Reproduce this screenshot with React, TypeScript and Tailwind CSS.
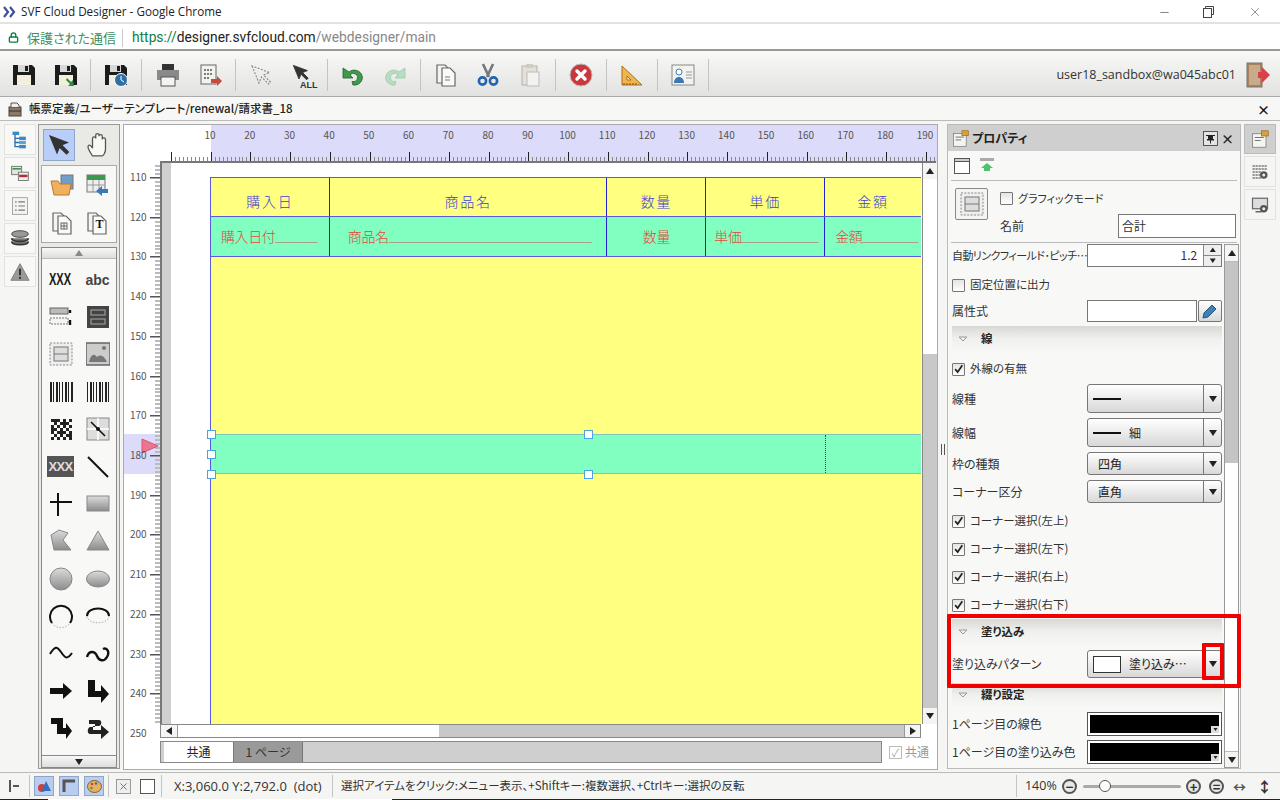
import type { ReactNode } from "react";
import { Minus, X as CloseIcon, Lock } from "lucide-react";

const Ico = ({ s = 24, children }: { s?: number; children: ReactNode }) => (
  <svg width={s} height={s} viewBox="0 0 24 24" className="block shrink-0">
    {children}
  </svg>
);

const Floppy = ({ children }: { children?: ReactNode }) => (
  <Ico>
    <path d="M1 2h19l3 3v17H1z" fill="#1c1c1c" />
    <rect x="6" y="2" width="11" height="7" fill="#d8d8d8" />
    <rect x="13" y="3" width="3" height="5" fill="#1c1c1c" />
    <rect x="5" y="12" width="14" height="10" fill="#f4efdc" />
    {children}
  </Ico>
);

const Page = ({ x = 7, y = 3, w = 13, h = 18, fill = "#f4f4f0" }) => (
  <path d={`M${x} ${y}h${w - 5}l5 5v${h - 5}h-${w}z`} fill={fill} stroke="#666" strokeWidth="1.2" />
);

const Pages = ({ children }: { children?: ReactNode }) => (
  <Ico>
    <Page x={3} y={2} />
    <Page x={8} y={5} fill="#fafafa" />
    {children}
  </Ico>
);

const Cursor = ({ color = "#333", dashed = false }) => (
  <path
    d="M3 3l7 17 2.5-6 7 7 2-2-7-7 6-2.5z"
    fill={dashed ? "none" : color}
    stroke={dashed ? "#888" : color}
    strokeWidth="1.1"
    strokeDasharray={dashed ? "2 1.4" : undefined}
  />
);

const Undo = ({ color, flip = false }: { color: string; flip?: boolean }) => (
  <Ico>
    <g transform={flip ? "translate(24 0) scale(-1 1)" : undefined}>
      <path d="M8 9a8 7.5 0 1 1 4 13l-1-3.5a4.2 4.2 0 1 0-2-6.5l3 3H2V5z" fill={color} stroke={flip ? "#9cc9ac" : "#1e5f2c"} strokeWidth=".8" />
    </g>
  </Ico>
);

// main toolbar icons, groups split by a thin separator
const toolbarGroups: { w: number; icons: ReactNode[] }[] = [
  { w: 90, icons: [<Floppy />, <Floppy><path d="M13 15l4 4 2-2 1 6h-6l2-2-4-4z" fill="#2d8a3e" /></Floppy>] },
  { w: 50, icons: [<Floppy><circle cx="17" cy="17" r="6.5" fill="#2f6fa8" stroke="#fff" /><path d="M17 13v4l3 2" stroke="#fff" fill="none" /></Floppy>] },
  {
    w: 93,
    icons: [
      <Ico>
        <rect x="6" y="1" width="12" height="6" fill="#333" />
        <rect x="1" y="7" width="22" height="10" fill="#8a8a8a" />
        <rect x="5" y="14" width="14" height="9" fill="#f4f4f4" stroke="#555" />
      </Ico>,
      <Ico>
        <rect x="3" y="2" width="15" height="19" fill="#f2f2ee" stroke="#666" />
        <path d="M6 7h9M6 11h9M6 15h6" stroke="#555" strokeDasharray="2 1" strokeWidth="1.4" />
        <path d="M13 16h6v-3l5 5-5 5v-3h-6z" fill="#c9483f" />
      </Ico>,
    ],
  },
  {
    w: 91,
    icons: [
      <Ico><Cursor dashed /></Ico>,
      <div className="relative">
        <Ico><g transform="scale(.8)"><Cursor /></g></Ico>
        <span className="absolute right-[-3px] bottom-[-3px] text-[9px] font-bold leading-none text-[#333] font-['Liberation_Sans',sans-serif]">ALL</span>
      </div>,
    ],
  },
  { w: 92, icons: [<Undo color="#3e9b4c" />, <Undo color="#b7dcc1" flip />] },
  {
    w: 134,
    icons: [
      <Pages><path d="M11 14h5M11 17h5" stroke="#777" /></Pages>,
      <Ico>
        <path d="M7 1l6 13M17 1l-6 13" stroke="#777" strokeWidth="2.6" />
        <circle cx="6.5" cy="18" r="3.6" fill="none" stroke="#2264b0" strokeWidth="2.6" />
        <circle cx="17.5" cy="18" r="3.6" fill="none" stroke="#2264b0" strokeWidth="2.6" />
      </Ico>,
      <Ico>
        <rect x="4" y="3" width="15" height="19" fill="#e3e0d8" stroke="#b5b2aa" />
        <rect x="8" y="1" width="7" height="4" fill="#cfccc4" />
        <rect x="9" y="9" width="12" height="14" fill="#f2f2ee" stroke="#bbb" />
      </Ico>,
    ],
  },
  {
    w: 50,
    icons: [
      <Ico>
        <circle cx="12" cy="12" r="11" fill="#c8383c" stroke="#bbb" />
        <path d="M8 8l8 8M16 8l-8 8" stroke="#fff" strokeWidth="3.4" strokeLinecap="round" />
      </Ico>,
    ],
  },
  {
    w: 50,
    icons: [
      <Ico>
        <path d="M2 22V3l20 19z" fill="#f0b64a" stroke="#a9701c" />
        <path d="M7 17v-4l4 4z" fill="#fff4d8" stroke="#a9701c" />
        <path d="M4 22v-2M7 22v-2M10 22v-2M13 22v-2M16 22v-2" stroke="#7a5010" />
      </Ico>,
    ],
  },
  {
    w: 50,
    icons: [
      <Ico>
        <rect x="1" y="2" width="22" height="20" fill="#f2f2ee" stroke="#888" />
        <circle cx="8" cy="9" r="3" fill="#fff" stroke="#3b78b5" />
        <path d="M3 20c0-8 10-8 10 0z" fill="#3b78b5" />
        <path d="M15 9h6M15 12h6M15 15h6" stroke="#999" />
      </Ico>,
    ],
  },
];

const sideIcons: ReactNode[] = [
  <Ico s={20}>
    <path d="M6 3v17h8M6 10h8M6 15h8" stroke="#2c6ca8" fill="none" strokeWidth="1.6" />
    <rect x="3" y="2" width="8" height="4" fill="#3d87c4" />
    <rect x="11" y="8" width="8" height="4" fill="#3d87c4" />
    <rect x="11" y="13" width="8" height="4" fill="#58a2d8" />
    <rect x="11" y="18" width="8" height="4" fill="#3d87c4" />
  </Ico>,
  <Ico s={20}>
    <rect x="2" y="4" width="12" height="10" fill="#e6e6e0" stroke="#666" />
    <rect x="3" y="6" width="10" height="2" fill="#3a9a50" />
    <rect x="10" y="11" width="12" height="10" fill="#f0f0ea" stroke="#666" />
    <rect x="11" y="14" width="10" height="3" fill="#b0303a" />
  </Ico>,
  <Ico s={20}>
    <rect x="3" y="2" width="18" height="20" fill="#f4f4f0" stroke="#999" />
    <path d="M6 7h2M10 7h8M6 12h2M10 12h8M6 17h2M10 17h8" stroke="#777" strokeWidth="1.4" />
  </Ico>,
  <Ico s={20}>
    <ellipse cx="12" cy="6" rx="10" ry="4" fill="#999" stroke="#333" />
    <path d="M2 11c0 5 20 5 20 0M2 15c0 5 20 5 20 0" fill="#777" stroke="#333" strokeWidth="2" />
  </Ico>,
  <Ico s={20}>
    <path d="M12 2l11 20H1z" fill="#9a9a9a" stroke="#777" />
    <path d="M12 8v8" stroke="#333" strokeWidth="2.4" />
    <circle cx="12" cy="19" r="1.4" fill="#333" />
  </Ico>,
];

const Barcode = ({ bars }: { bars: number[] }) => (
  <Ico>
    {bars.map((b, i) => (
      <rect key={i} x={1 + i * 3} y="2" width={b} height="20" fill="#222" />
    ))}
  </Ico>
);

const grey = "url(#shape-grey)";
const shapeIcons: ReactNode[] = [
  <span className="text-[17px] font-bold leading-none text-[#1a1a1a] scale-x-[.65] font-['Liberation_Sans',sans-serif]">XXX</span>,
  <span className="text-[14px] font-bold leading-none text-[#444] font-['Liberation_Sans',sans-serif]">abc</span>,
  <Ico>
    <rect x="1" y="3" width="18" height="6" fill="#bbb" stroke="#666" />
    <rect x="1" y="13" width="18" height="6" fill="#f4f4f0" stroke="#777" strokeDasharray="2 1" />
    <path d="M21 5v3M21 15v5" stroke="#111" strokeWidth="2.4" />
  </Ico>,
  <Ico>
    <rect x="1" y="1" width="22" height="22" fill="#444" />
    <rect x="5" y="5" width="14" height="5" fill="none" stroke="#aaa" />
    <rect x="5" y="14" width="14" height="5" fill="none" stroke="#aaa" />
  </Ico>,
  <Ico>
    <rect x="1" y="1" width="22" height="22" fill="#eee" stroke="#888" strokeDasharray="2 1.4" />
    <rect x="5" y="5" width="14" height="14" fill="#ddd" stroke="#777" />
    <path d="M5 12h14" stroke="#777" />
  </Ico>,
  <Ico>
    <rect x="0" y="1" width="24" height="22" fill="#ccc" stroke="#666" strokeWidth="1.5" />
    <path d="M3 20c2-8 5-9 8-5 3-3 7-2 10 5z" fill="#777" />
    <circle cx="18" cy="6" r="2" fill="#777" />
  </Ico>,
  <Barcode bars={[2, 1, 2, 1, 1, 2, 1, 2]} />,
  <Barcode bars={[1, 2, 1, 1, 2, 1, 2, 1]} />,
  <Ico>
    {Array.from({ length: 49 }, (_, i) =>
      (i % 7 + Math.floor(i / 7)) % 2 === 0 || i % 5 === 1 ? <rect key={i} x={2 + (i % 7) * 3} y={2 + Math.floor(i / 7) * 3} width="3" height="3" fill="#222" /> : null
    )}
  </Ico>,
  <Ico>
    <rect x="1" y="1" width="22" height="22" fill="#ddd" stroke="#888" />
    <path d="M12 1v22M1 12h22" stroke="#fff" strokeWidth="1.5" />
    <path d="M5 5l14 14" stroke="#111" strokeWidth="1.6" />
    <circle cx="12" cy="12" r="2" fill="#111" />
  </Ico>,
  <span className="bg-[#555] px-[1px] text-[13px] font-bold leading-[21px] tracking-tighter text-[#ddd] font-['Liberation_Sans',sans-serif]">XXX</span>,
  <Ico><path d="M2 2l20 20" stroke="#111" strokeWidth="2" /></Ico>,
  <Ico><path d="M1 10h22M9 1v23" stroke="#111" strokeWidth="2" /></Ico>,
  <Ico><rect x="1" y="4" width="22" height="15" fill={grey} stroke="#888" /></Ico>,
  <Ico><path d="M2 6l8-5 9 3-5 7 8 10H5z" fill={grey} stroke="#888" /></Ico>,
  <Ico><path d="M12 2l11 19H1z" fill={grey} stroke="#888" /></Ico>,
  <Ico><circle cx="12" cy="12" r="11" fill={grey} stroke="#888" /></Ico>,
  <Ico><ellipse cx="12" cy="12" rx="11.5" ry="8" fill={grey} stroke="#888" /></Ico>,
  <Ico>
    <path d="M3 19a11 11 0 1 1 18 0" fill="none" stroke="#111" strokeWidth="2" />
    <path d="M3 19a11 11 0 0 0 18 0" fill="none" stroke="#aaa" strokeDasharray="1.5 1.5" />
  </Ico>,
  <Ico>
    <path d="M1 12c0-10 22-10 22 0" fill="none" stroke="#111" strokeWidth="2" />
    <path d="M1 12c0 9 22 9 22 0" fill="none" stroke="#aaa" strokeDasharray="1.5 1.5" />
  </Ico>,
  <Ico><path d="M1 12c5-8 7-8 11-2s6 8 11 1" fill="none" stroke="#111" strokeWidth="2" /></Ico>,
  <Ico><path d="M1 15c2-7 8-6 10-1s7 6 10 1 0-10-4-8" fill="none" stroke="#111" strokeWidth="2.4" /></Ico>,
  <Ico><path d="M1 9h13V4l9 8-9 8v-5H1z" fill="#111" /></Ico>,
  <Ico><path d="M2 1h7v11h6V6l8 9-8 9v-6H2z" fill="#111" /></Ico>,
  <Ico><path d="M2 2h12v10h3V7l6 8-6 8v-5H8V8H2z" fill="#111" /></Ico>,
  <Ico><path d="M3 4h10c3 0 3 5 0 6H7v4h8V9l8 7-8 7v-5H4c-3 0-3-6 0-7h5V8H3z" fill="#222" /></Ico>,
];

const Arrow = ({ dir = "down", size = 4, color = "#222" }: { dir?: "up" | "down" | "left" | "right"; size?: number; color?: string }) => {
  const d = { up: "M5 2l4 6H1z", down: "M1 2h8L5 8z", left: "M8 1v8L2 5z", right: "M2 1v8l6-4z" }[dir];
  return (
    <svg width={size * 2.5} height={size * 2.5} viewBox="0 0 10 10" className="block shrink-0">
      <path d={d} fill={color} />
    </svg>
  );
};

const Check = ({ on = false }: { on?: boolean }) => (
  <span className="flex h-[13px] w-[13px] shrink-0 items-center justify-center rounded-[1px] border border-[#777] bg-gradient-to-b from-[#e4e4e4] to-white">
    {on && (
      <svg width="13" height="13" viewBox="0 0 13 13">
        <path d="M2.5 6l3 3.5L11 1.5" fill="none" stroke="#222" strokeWidth="2" />
      </svg>
    )}
  </span>
);

const Combo = ({ h, children }: { h: string; children: ReactNode }) => (
  <div className={`flex ${h} w-[135px] shrink-0 items-stretch rounded-[3px] border border-[#777] bg-gradient-to-b from-white to-[#d8d8d8]`}>
    <div className="flex min-w-0 flex-1 items-center pl-[5px]">{children}</div>
    <div className="flex w-[18px] items-center justify-center border-l border-[#777]">
      <Arrow />
    </div>
  </div>
);

const LineSample = () => <span className="block h-[2px] w-[28px] bg-[#111]" />;

const Row = ({ label, className, children }: { label: string; className: string; children: ReactNode }) => (
  <div className={`flex items-center justify-between ${className}`}>
    <span className="text-[12px] leading-none text-[#333] whitespace-nowrap">{label}</span>
    {children}
  </div>
);

const CheckRow = ({ label, on = false, className }: { label: string; on?: boolean; className: string }) => (
  <div className={`flex h-[22px] items-center gap-[5px] ${className}`}>
    <Check on={on} />
    <span className="text-[11.5px] leading-none text-[#333]">{label}</span>
  </div>
);

const Section = ({ label, className }: { label: string; className: string }) => (
  <div className={`flex items-center gap-[13px] bg-gradient-to-b from-[#d8d8d4] via-[#f0f1ee] to-[#f7f8f5] pl-[6px] ${className}`}>
    <svg width="10" height="6" viewBox="0 0 10 6"><path d="M1 1h8L5 5z" fill="none" stroke="#999" /></svg>
    <span className="text-[11.5px] font-bold leading-none text-[#222]">{label}</span>
  </div>
);

const ColorBox = () => (
  <div className="relative h-[24px] w-[135px] shrink-0 border border-[#555] bg-white p-[2px]">
    <div className="h-full w-full bg-black" />
    <span className="absolute right-[2px] bottom-[2px] flex h-[7px] w-[8px] items-center justify-center bg-[#ddd]">
      <Arrow size={2} />
    </span>
  </div>
);

const tens = Array.from({ length: 19 }, (_, i) => (i + 1) * 10);
const vTens = Array.from({ length: 15 }, (_, i) => 110 + i * 10);

const TopRuler = () => (
  <div className="relative h-[38px] w-full shrink-0 bg-white">
    <div className="absolute inset-y-0 left-[87px] right-0 bg-[#dcdcfa]" />
    <svg width="812" height="38" className="absolute inset-0">
      {Array.from({ length: 195 }, (_, i) => {
        const x = 47 + i * 3.972;
        const major = i % 10 === 0;
        return <rect key={i} x={Math.round(x)} y={major ? 27 : 32} width="1" height={major ? 10 : 5} fill={major ? "#222" : "#888"} />;
      })}
      <rect x="36" y="36" width="776" height="2" fill="#777" />
    </svg>
    {tens.map((t) => (
      <span
        key={t}
        className="absolute top-[4px] -translate-x-1/2 text-[10px] leading-[12px] text-[#555]"
        style={{ left: 86 + (t / 10 - 1) * 39.72 }}
      >
        {t}
      </span>
    ))}
  </div>
);

const LeftRuler = () => (
  <div className="relative h-full w-[36px] shrink-0 bg-white">
    <div className="absolute left-0 right-0 top-[271px] h-[40px] bg-[#dcdcfa]" />
    <svg width="36" height="561" className="absolute inset-0">
      {Array.from({ length: 142 }, (_, i) => {
        const y = 14 + (i - 3) * 3.972;
        const major = (i - 3) % 10 === 0;
        return <rect key={i} x={major ? 26 : 31} y={Math.round(y)} width={major ? 10 : 5} height={major ? 1.5 : 2} fill={major ? "#555" : "#bbb"} />;
      })}
      <path d="M18 276v14l16-7z" fill="#ee7590" stroke="#d9536f" />
    </svg>
    {vTens.map((t, i) => (
      <span
        key={t}
        className="absolute left-[6px] -translate-y-1/2 text-[10px] leading-[12px] text-[#555]"
        style={{ top: 14 + i * 39.72 }}
      >
        {t}
      </span>
    ))}
  </div>
);

const Handle = ({ className }: { className: string }) => (
  <span className={`absolute h-[9px] w-[9px] border border-[#4aa3df] bg-white ${className}`} />
);

const columns = [
  { w: "w-[119px]", head: "購入日", field: "購入日付", line: "______", pad: "pl-[10px]" },
  { w: "w-[278px]", head: "商品名", field: "商品名", line: "_____________________________", pad: "pl-[18px]" },
  { w: "w-[99px]", head: "数量", field: "数量", line: "", pad: "justify-center" },
  { w: "w-[119px]", head: "単価", field: "単価", line: "___________", pad: "pl-[8px]" },
  { w: "w-[96px]", head: "金額", field: "金額", line: "________", pad: "pl-[10px]" },
];

const Report = () => (
  <div className="relative ml-[39px] mt-[14px] w-[711px] border-l border-[#5a5ae0]">
    <div className="flex h-[40px] border-y border-[#5a5ae0] bg-[#ffff80]">
      {columns.map((c) => (
        <div key={c.head} className={`flex ${c.w} items-center justify-center border-r border-[#2222d0] pt-[8px] text-[14px] font-light tracking-[1.7px] text-[#4040d8] last:border-r-0`}>
          {c.head}
        </div>
      ))}
    </div>
    <div className="flex h-[40px] border-b border-[#5a5ae0] bg-[#80ffc0]">
      {columns.map((c) => (
        <div key={c.head} className={`flex ${c.w} items-center border-r border-[#2222d0] ${c.pad} whitespace-nowrap text-[14px] font-light text-[#e0483c] last:border-r-0`}>
          <span className="tracking-[-.4px]">{c.field}</span>
          <span className="font-['Liberation_Serif',serif] text-[#b08a80]">{c.line}</span>
        </div>
      ))}
    </div>
    <div className="h-[177px] bg-[#ffff80]" />
    <div className="flex h-[40px] border-y border-[#7fc8c0] bg-[#80ffc0]">
      <div className="ml-[614px] h-full border-r border-dotted border-[#444]" />
    </div>
    <div className="h-[250px] bg-[#ffff80]" />
    <Handle className="left-[-4px] top-[253px]" />
    <Handle className="left-[373px] top-[253px]" />
    <Handle className="left-[-4px] top-[273px]" />
    <Handle className="left-[-4px] top-[293px]" />
    <Handle className="left-[373px] top-[293px]" />
  </div>
);

const ScrollBtn = ({ dir, className = "" }: { dir: "up" | "down" | "left" | "right"; className?: string }) => (
  <div className={`flex shrink-0 items-center justify-center bg-[#f4f4f2] ${className}`}>
    <Arrow dir={dir} />
  </div>
);

const Sep = () => <span className="h-[32px] w-px shrink-0 bg-[#c4c4c0]" />;
const StatusSep = () => <span className="block h-[22px] w-px shrink-0 bg-[#c4c4c0]" />;

const StatusToggle = ({ children }: { children: ReactNode }) => (
  <span className="flex h-[20px] w-[20px] items-center justify-center border border-[#8fa6c8] bg-[#b8cdf0]">{children}</span>
);

const Round = ({ children }: { children: ReactNode }) => (
  <span className="flex h-[15px] w-[15px] items-center justify-center rounded-full border-2 border-[#555] bg-[#e8e8e8] text-[13px] font-bold leading-none text-[#333]">
    {children}
  </span>
);

export default function App() {
  return (
    <div className="relative flex h-[800px] w-[1280px] flex-col overflow-hidden bg-white font-['Noto_Sans_CJK_JP','Noto_Sans',sans-serif] text-[#222] [font-feature-settings:'palt']">
      <svg width="0" height="0" className="absolute">
        <defs>
          <linearGradient id="shape-grey" x1="0" y1="0" x2="0" y2="1">
            <stop offset="0" stopColor="#dcdcdc" />
            <stop offset="1" stopColor="#8c8c8c" />
          </linearGradient>
        </defs>
      </svg>

      {/* browser chrome */}
      <div className="flex h-[24px] shrink-0 items-center border-b-2 border-[#e2e2e2] pl-[3px] pt-[2px]">
        <svg width="14" height="12" viewBox="0 0 14 12" className="mr-[4px]">
          <path d="M1 1l4 5-4 5M7 1l4 5-4 5" fill="none" stroke="#3f4f9a" strokeWidth="2.2" />
        </svg>
        <span className="font-['Open_Sans',sans-serif] text-[11.7px] leading-none text-[#222]">SVF Cloud Designer - Google Chrome</span>
        <div className="ml-auto flex items-center text-[#444]">
          <Minus size={13} strokeWidth={1.2} className="mr-[32px]" />
          <svg width="11" height="12" viewBox="0 0 11 12" fill="none" stroke="currentColor" className="mr-[34px]">
            <rect x=".5" y="2.5" width="8" height="9" />
            <path d="M2.5 2.5v-2h8v8h-2" />
          </svg>
          <CloseIcon size={14} strokeWidth={1} className="mr-[18px]" />
        </div>
      </div>
      <div className="flex h-[27px] shrink-0 items-center border-b-2 border-[#999] pl-[8px] pt-[2px]">
        <Lock size={11} strokeWidth={3} className="mr-[8px] text-[#0b8043]" />
        <span className="w-[86px] whitespace-nowrap text-[13px] leading-none text-[#3f8f63]">保護された通信</span>
        <span className="mx-[9px] h-[18px] w-px bg-[#ccc]" />
        <span className="font-['Roboto',sans-serif] text-[13.8px] leading-none">
          <span className="text-[#0b8043]">https://</span>
          <span className="text-[#222]">designer.svfcloud.com</span>
          <span className="text-[#888]">/webdesigner/main</span>
        </span>
      </div>

      {/* main toolbar */}
      <div className="flex h-[46px] shrink-0 items-center border-b border-[#aaa] bg-gradient-to-b from-[#f8f9f6] to-[#e2e3e0] pt-[3px]">
        {toolbarGroups.map((g, i) => (
          <div key={i} className="flex items-center">
            <div className="flex items-center justify-center gap-[18px]" style={{ width: g.w }}>
              {g.icons.map((ic, j) => (
                <span key={j}>{ic}</span>
              ))}
            </div>
            <Sep />
          </div>
        ))}
        <span className="ml-auto mr-[10px] text-[12.5px] leading-none text-[#333] font-['Open_Sans',sans-serif]">user18_sandbox@wa045abc01</span>
        <svg width="24" height="26" viewBox="0 0 24 26" className="mr-[10px]">
          <rect x="1" y="1" width="15" height="24" fill="#a9825f" stroke="#777" />
          <rect x="3" y="3" width="11" height="20" fill="#c8ab8a" />
          <path d="M12 10h4V5l8 8-8 8v-5h-4z" fill="#d8404a" />
        </svg>
      </div>

      {/* document tab */}
      <div className="flex h-[24px] shrink-0 items-center border-b border-[#bbb] bg-[#f7f8f5] pl-[8px] pr-[10px] pt-[1px]">
        <svg width="14" height="16" viewBox="0 0 14 16" className="mr-[7px]">
          <rect x="1" y="6" width="12" height="9" fill="#8c7a68" stroke="#444" />
          <path d="M3 6V2h6l2 2v2" fill="#eee" stroke="#555" />
          <path d="M1 10h12" stroke="#333" />
        </svg>
        <span className="text-[11.5px] font-medium leading-none text-[#222]">帳票定義/ユーザーテンプレート/renewal/請求書_18</span>
        <span className="ml-auto text-[13px] font-bold leading-none text-[#111]">×</span>
      </div>

      {/* workspace */}
      <div className="flex h-[651px] shrink-0 bg-[#f5f6f3] pl-[4px] pt-[3px]">
        <div className="flex w-[32px] shrink-0 flex-col gap-[2px]">
          {sideIcons.map((ic, i) => (
            <div key={i} className="flex h-[31px] items-center justify-center border border-[#e2e2de] bg-[#f8f9f6]">
              {ic}
            </div>
          ))}
        </div>

        {/* tool palette */}
        <div className="ml-[2px] flex h-[645px] w-[82px] shrink-0 flex-col border border-[#999] bg-[#e9e9e6]">
          <div className="flex h-[40px] shrink-0 items-center pl-[4px]">
            <span className="flex h-[32px] w-[32px] items-center justify-center border border-[#8fa6c8] bg-[#b8cdf8]">
              <Ico><Cursor /></Ico>
            </span>
            <span className="ml-[11px]">
              <svg width="26" height="26" viewBox="0 0 24 24" fill="#f8f8f4" stroke="#555" strokeWidth="1.2">
                <path d="M6 22c-2-3-5-7-4-9s3 0 4 2V6c0-2 3-2 3 0V3c0-2 3-2 3 0v1c0-2 3-2 3 0v3c0-2 3-2 3 0v9c0 3-2 6-3 6z" />
              </svg>
            </span>
          </div>
          <div className="mx-[2px] grid h-[78px] shrink-0 grid-cols-2 place-items-center border border-[#aaa] bg-[#f8f9f6] px-[2px]">
            <Ico>
              <rect x="11" y="2" width="12" height="14" fill="#6f9fc8" stroke="#777" />
              <path d="M1 8h7l2 3h11l-2 11H4z" fill="#f0b060" stroke="#b87a2c" />
            </Ico>
            <Ico>
              <rect x="2" y="2" width="18" height="17" fill="#eee" stroke="#777" />
              <rect x="2" y="2" width="18" height="5" fill="#3a9a50" />
              <path d="M2 12h18M8 7v12M14 7v12" stroke="#999" />
              <path d="M11 18l6-5v3h6v4h-6v3z" fill="#3b78b5" />
            </Ico>
            <Pages>
              <rect x="11" y="12" width="6" height="6" fill="none" stroke="#666" />
              <path d="M14 12v6M11 15h6" stroke="#666" />
            </Pages>
            <div className="relative">
              <Pages />
              <span className="absolute left-[11px] top-[7px] text-[12px] font-bold leading-none text-[#111] font-['Liberation_Serif',serif]">T</span>
            </div>
          </div>
          <div className="mx-[2px] mt-[4px] flex min-h-0 flex-1 flex-col border border-[#888] bg-[#f8f9f6]">
            <div className="flex h-[11px] shrink-0 items-center justify-center border-b border-[#bbb] bg-gradient-to-b from-[#f8f8f8] to-[#ddd]">
              <Arrow dir="up" color="#888" />
            </div>
            <div className="grid min-h-0 flex-1 grid-cols-2 content-start justify-items-center overflow-hidden pt-[2px]">
              {shapeIcons.map((ic, i) => (
                <div key={i} className="flex h-[37.4px] w-[36px] items-center justify-center">
                  {ic}
                </div>
              ))}
            </div>
            <div className="flex h-[12px] shrink-0 items-center justify-center border-t border-[#888] bg-gradient-to-b from-[#f8f8f8] to-[#ddd]">
              <Arrow />
            </div>
          </div>
        </div>

        {/* report canvas */}
        <div className="ml-[3px] flex h-[646px] w-[815px] shrink-0 flex-col border border-[#aaa] bg-white">
          <TopRuler />
          <div className="flex h-[561px] shrink-0">
            <LeftRuler />
            <div className="flex min-w-0 flex-1 border-l-2 border-[#777]">
              <div className="w-[9px] shrink-0 bg-[#cfcfcf]" />
              <div className="min-w-0 flex-1 overflow-hidden bg-white">
                <Report />
              </div>
              <div className="flex w-[15px] shrink-0 flex-col border-l border-[#888] bg-[#c8c8c8]">
                <ScrollBtn dir="up" className="h-[16px]" />
                <div className="h-[175px] shrink-0 bg-white" />
                <div className="flex-1" />
                <ScrollBtn dir="down" className="h-[16px]" />
              </div>
            </div>
          </div>
          <div className="ml-[36px] flex h-[14px] w-[761px] shrink-0 border border-[#888] bg-[#c8c8c8]">
            <ScrollBtn dir="left" className="w-[17px] border-r border-[#999]" />
            <div className="w-[261px] shrink-0 bg-white" />
            <div className="flex-1" />
            <ScrollBtn dir="right" className="w-[16px] border-l border-[#999]" />
          </div>
          <div className="ml-[36px] mt-[3px] flex h-[22px] items-stretch">
            <div className="flex w-[722px] border border-[#888] bg-[#cfcfcf] pl-[3px]">
              <div className="flex w-[69px] items-center justify-center bg-white text-[12px] leading-none">共通</div>
              <div className="flex w-[70px] items-center justify-center border-x border-[#777] bg-[#9a9a9a] text-[12px] leading-none text-[#333]">1 ページ</div>
            </div>
            <div className="ml-[7px] flex items-center gap-[3px] text-[12px] leading-none text-[#999]">
              <span className="flex h-[13px] w-[13px] items-center justify-center border border-[#bbb] text-[11px] text-[#aaa]">✓</span>
              共通
            </div>
          </div>
        </div>

        {/* splitter */}
        <div className="flex w-[9px] shrink-0 items-start justify-center pt-[320px]">
          <span className="h-[11px] w-[4px] border-x border-[#555]" />
        </div>

        {/* property panel */}
        <div className="flex h-[645px] w-[294px] shrink-0 flex-col border border-[#bbb] bg-[#f8f9f6]">
          <div className="flex h-[26px] shrink-0 items-center bg-[#cfcfcf] pl-[4px]">
            <Ico s={17}>
              <rect x="2" y="5" width="18" height="18" fill="#f4f4f0" stroke="#777" />
              <path d="M5 10h12M5 14h8" stroke="#777" strokeWidth="1.4" />
              <rect x="14" y="1" width="9" height="7" fill="#d8a040" stroke="#9a7020" />
            </Ico>
            <span className="ml-[3px] text-[12px] font-bold leading-none">プロパティ</span>
            <span className="ml-auto flex h-[15px] w-[15px] items-center justify-center border border-[#555] bg-[#e4e4e4]">
              <svg width="11" height="11" viewBox="0 0 11 11">
                <path d="M1 2.5h9M3.5 2.5h4v3l1.5 1.5H2L3.5 5.5zM5.5 7v3.5" fill="#222" stroke="#222" />
              </svg>
            </span>
            <span className="ml-[3px] mr-[6px] text-[13px] font-bold leading-none">×</span>
          </div>
          <div className="mx-[3px] flex h-[30px] shrink-0 items-center gap-[9px] border-b border-[#bbb] pl-[3px]">
            <svg width="16" height="16" viewBox="0 0 16 16">
              <rect x=".5" y=".5" width="15" height="15" fill="#fff" stroke="#555" />
              <rect x=".5" y=".5" width="15" height="3" fill="#ccc" stroke="#555" />
            </svg>
            <svg width="16" height="16" viewBox="0 0 16 16">
              <rect x="1" y="0" width="14" height="3" fill="#aaa" />
              <path d="M8 5l6 5h-3v3H5v-3H2z" fill="#4ec46a" />
            </svg>
          </div>
          <div className="mx-[3px] h-[62px] shrink-0 border-b border-[#bbb]">
            <div className="flex">
              <div className="ml-[4px] mt-[7px] flex h-[32px] w-[33px] shrink-0 items-center justify-center rounded-[2px] border border-[#888] bg-[#f4f4f0]">
                <Ico>
                  <rect x="1" y="1" width="22" height="22" fill="#eee" stroke="#888" strokeDasharray="2 1.4" />
                  <rect x="5" y="5" width="14" height="14" fill="#ddd" stroke="#777" />
                  <path d="M5 12h14" stroke="#777" />
                </Ico>
              </div>
              <div className="ml-[12px] flex-1 pr-[1px]">
                <div className="mt-[11px] flex items-center gap-[5px]">
                  <Check />
                  <span className="text-[11px] leading-none text-[#333]">グラフィックモード</span>
                </div>
                <div className="mt-[9px] flex items-center justify-between">
                  <span className="text-[12px] leading-none text-[#333]">名前</span>
                  <span className="flex h-[24px] w-[118px] items-center border border-[#777] bg-white pl-[3px] text-[12px] leading-none text-[#333]">合計</span>
                </div>
              </div>
            </div>
          </div>

          <div className="flex min-h-0 flex-1 pl-[4px] pt-[1px]">
            <div className="w-[270px] shrink-0 overflow-hidden">
              <div className="flex h-[23px] items-center justify-between">
                <span className="whitespace-nowrap text-[11px] leading-none tracking-[-.55px] text-[#333]">自動リンクフィールド･ピッチ…</span>
                <div className="flex h-[23px] w-[135px] shrink-0 border border-[#777] bg-white">
                  <span className="flex-1 pr-[6px] pt-[4px] text-right text-[12px] leading-none text-[#333]">1.2</span>
                  <span className="flex w-[18px] flex-col border-l border-[#888]">
                    <span className="flex flex-1 items-center justify-center border-b border-[#888] bg-[#eee]"><Arrow dir="up" size={3} /></span>
                    <span className="flex flex-1 items-center justify-center bg-[#eee]"><Arrow size={3} /></span>
                  </span>
                </div>
              </div>
              <CheckRow label="固定位置に出力" className="mt-[7px]" />
              <Row label="属性式" className="mt-[4px] h-[22px]">
                <div className="flex">
                  <span className="h-[22px] w-[110px] border border-[#777] bg-white" />
                  <span className="ml-[1px] flex h-[22px] w-[24px] items-center justify-center rounded-[2px] border border-[#777] bg-gradient-to-b from-white to-[#d8d8d8]">
                    <svg width="16" height="16" viewBox="0 0 16 16">
                      <path d="M1 15l1-5 8-8 4 4-8 8z" fill="#3f7fb8" stroke="#28567e" />
                    </svg>
                  </span>
                </div>
              </Row>
              <Section label="線" className="mt-[4px] h-[26px]" />
              <CheckRow label="外線の有無" on className="mt-[6px]" />
              <Row label="線種" className="mt-[4px] h-[29px]">
                <Combo h="h-[29px]"><LineSample /></Combo>
              </Row>
              <Row label="線幅" className="mt-[5px] h-[29px]">
                <Combo h="h-[29px]">
                  <LineSample />
                  <span className="ml-[8px] text-[12px] leading-none">細</span>
                </Combo>
              </Row>
              <Row label="枠の種類" className="mt-[5px] h-[23px]">
                <Combo h="h-[23px]"><span className="pl-[5px] text-[12px] leading-none">四角</span></Combo>
              </Row>
              <Row label="コーナー区分" className="mt-[5px] h-[23px]">
                <Combo h="h-[23px]"><span className="pl-[5px] text-[12px] leading-none">直角</span></Combo>
              </Row>
              <CheckRow label="コーナー選択(左上)" on className="mt-[7px]" />
              <CheckRow label="コーナー選択(左下)" on className="mt-[6px]" />
              <CheckRow label="コーナー選択(右上)" on className="mt-[6px]" />
              <CheckRow label="コーナー選択(右下)" on className="mt-[6px]" />
              <Section label="塗り込み" className="mt-[3px] h-[26px]" />
              <Row label="塗り込みパターン" className="mt-[5px] h-[28px]">
                <Combo h="h-[28px]">
                  <span className="h-[17px] w-[28px] shrink-0 border border-[#333] bg-white" />
                  <span className="ml-[8px] text-[12px] leading-none">塗り込み…</span>
                </Combo>
              </Row>
              <Section label="綴り設定" className="mt-[5px] h-[24px]" />
              <Row label="1ページ目の線色" className="mt-[5px] h-[24px]"><ColorBox /></Row>
              <Row label="1ページ目の塗り込み色" className="mt-[4px] h-[24px]"><ColorBox /></Row>
            </div>
            <div className="ml-[2px] flex h-[524px] w-[15px] shrink-0 flex-col border border-[#999] bg-white">
              <ScrollBtn dir="up" className="h-[17px] border-b border-[#bbb]" />
              <div className="h-[201px] shrink-0 bg-[#c4c4c4]" />
              <div className="flex-1" />
              <ScrollBtn dir="down" className="h-[16px] border-t border-[#bbb]" />
            </div>
          </div>
        </div>

        {/* right strip */}
        <div className="ml-[3px] flex w-[32px] shrink-0 flex-col gap-[2px]">
          <div className="flex h-[30px] items-center justify-center border border-[#bbb] bg-[#cfcfcf]">
            <Ico s={18}>
              <rect x="2" y="5" width="18" height="18" fill="#f4f4f0" stroke="#777" />
              <path d="M5 10h12M5 14h8" stroke="#777" strokeWidth="1.4" />
              <rect x="14" y="1" width="9" height="7" fill="#d8a040" stroke="#9a7020" />
            </Ico>
          </div>
          <div className="flex h-[31px] items-center justify-center border border-[#e2e2de]">
            <Ico s={18}>
              <path d="M2 4h20M2 8h20M2 12h12M2 16h12M2 20h12" stroke="#777" strokeWidth="2" strokeDasharray="3 1" />
              <circle cx="17" cy="16" r="5" fill="#555" />
              <circle cx="17" cy="16" r="2" fill="#eee" />
            </Ico>
          </div>
          <div className="flex h-[31px] items-center justify-center border border-[#e2e2de]">
            <Ico s={18}>
              <rect x="2" y="3" width="20" height="14" fill="#ddd" stroke="#666" strokeWidth="1.6" />
              <path d="M6 21h8" stroke="#666" strokeWidth="2" />
              <circle cx="17" cy="17" r="5" fill="#555" />
              <circle cx="17" cy="17" r="2" fill="#eee" />
            </Ico>
          </div>
        </div>
      </div>

      {/* status bar */}
      <div className="flex h-[27px] shrink-0 items-center border-t border-[#bbb] bg-[#f5f6f3] pr-[8px] text-[12px] leading-none text-[#333]">
        <span className="ml-[9px] flex w-[16px] items-center gap-[2px]">
          <span className="h-[12px] w-[2px] bg-[#555]" />
          <span className="h-[2px] w-[6px] bg-[#555]" />
        </span>
        <span className="ml-[4px] mr-[4px]"><StatusSep /></span>
        <span className="flex gap-[5px]">
          <StatusToggle>
            <svg width="15" height="15" viewBox="0 0 15 15">
              <circle cx="5" cy="9" r="4" fill="#d04040" />
              <path d="M9 2l5 10H5z" fill="#3070c0" />
            </svg>
          </StatusToggle>
          <StatusToggle>
            <svg width="14" height="14" viewBox="0 0 14 14"><path d="M2 13V2h11" fill="none" stroke="#555" strokeWidth="3" /></svg>
          </StatusToggle>
          <StatusToggle>
            <svg width="15" height="15" viewBox="0 0 15 15">
              <ellipse cx="7.5" cy="7.5" rx="7" ry="6" fill="#e8b060" stroke="#8a6020" />
              <circle cx="5" cy="5" r="1.3" fill="#d04040" />
              <circle cx="9" cy="4.5" r="1.3" fill="#3070c0" />
              <circle cx="4.5" cy="9" r="1.3" fill="#40a050" />
            </svg>
          </StatusToggle>
        </span>
        <span className="ml-[4px]"><StatusSep /></span>
        <span className="ml-[7px] flex h-[15px] w-[15px] items-center justify-center border border-[#999] bg-[#eee]">
          <CloseIcon size={11} strokeWidth={2} className="text-[#d04040]" />
        </span>
        <span className="ml-[9px] h-[15px] w-[15px] border border-[#555] bg-white" />
        <span className="ml-[6px]"><StatusSep /></span>
        <span className="ml-[12px] w-[158px] font-['Open_Sans',sans-serif] text-[13px] whitespace-pre">X:3,060.0 Y:2,792.0  (dot)</span>
        <StatusSep />
        <span className="ml-[8px] whitespace-nowrap text-[11.5px]">選択アイテムをクリック:メニュー表示、+Shiftキー:複数選択、+Ctrlキー:選択の反転</span>
        <span className="ml-auto"><StatusSep /></span>
        <span className="ml-[8px] w-[36px] font-['Open_Sans',sans-serif] text-[12.5px]">140%</span>
        <span className="ml-[1px]"><Round>−</Round></span>
        <span className="relative ml-[6px] h-[3px] w-[98px] rounded-full bg-[#aaa]">
          <span className="absolute left-[16px] top-[-5px] h-[12px] w-[12px] rounded-full border border-[#555] bg-white" />
        </span>
        <span className="ml-[5px]"><Round>+</Round></span>
        <span className="ml-[8px]"><Round>=</Round></span>
        <span className="ml-[9px] text-[13px] font-bold text-[#555]">↔</span>
        <span className="ml-[11px] text-[15px] font-bold text-[#333]">↕</span>
      </div>
      <div className="flex h-px shrink-0">
        <span className="w-[48px] bg-[#222]" />
        <span className="w-[344px]" />
        <span className="flex-1 bg-[#222]" />
      </div>

      {/* annotation boxes */}
      <div className="pointer-events-none absolute left-[947px] top-[614px] h-[74px] w-[294px] rounded-[1px] border-4 border-[#f00000]" />
      <div className="pointer-events-none absolute left-[1202px] top-[643px] h-[37px] w-[22px] rounded-[1px] border-4 border-[#f00000]" />
    </div>
  );
}
